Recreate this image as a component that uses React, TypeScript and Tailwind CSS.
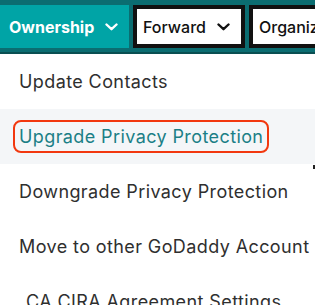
import React from "react";

function Chevron({ color }: { color: string }) {
  return (
    <svg width="13" height="8" viewBox="0 0 13 8" fill="none">
      <path d="M1.5 1.5 L6.5 6.2 L11.5 1.5" stroke={color} strokeWidth="2.4" strokeLinecap="round" strokeLinejoin="round" />
    </svg>
  );
}

export default function App() {
  const font = { fontFamily: "Inter, 'Noto Sans', sans-serif" };
  return (
    <div className="w-[315px] h-[305px] overflow-hidden bg-white relative" style={font}>
      <div className="flex h-[54px] bg-[#0b6d71] pt-[5px] gap-[4px] border-b-2 border-[#0a4f52] items-start">
        <div className="w-[129px] h-[43px] bg-[#00a4a6] flex items-center pl-[9px] gap-[11px] text-white font-bold text-[16px] shrink-0">
          <span>Ownership</span>
          <Chevron color="#ffffff" />
        </div>
        <div className="w-[112px] h-[43px] border-4 border-[#111111] bg-white flex items-center pl-[6px] gap-[11px] text-[#111111] font-medium text-[16px] shrink-0">
          <span>Forward</span>
          <Chevron color="#111111" />
        </div>
        <div className="w-[120px] h-[43px] border-4 border-[#111111] bg-white flex items-center pl-[6px] text-[#111111] font-medium text-[16px] shrink-0">
          <span>Organize</span>
        </div>
      </div>
      <div className="flex flex-col text-[18px] tracking-[0.4px] text-[#2f2f2f]">
        <div className="h-[55px] flex items-center pl-[19px]">Update Contacts</div>
        <div className="h-[55px] flex items-center pl-[13px] bg-[#f4f6f8]">
          <span className="border-2 border-[#f2380f] rounded-[8px] px-[4px] h-[33px] flex items-center text-[#1b7f86]">
            Upgrade Privacy Protection
          </span>
        </div>
        <div className="h-[55px] flex items-center pl-[19px] relative">
          Downgrade Privacy Protection
          <span className="absolute right-0 top-[1px] w-[2px] h-[4px] bg-[#222]" />
        </div>
        <div className="h-[55px] flex items-center pl-[19px]">Move to other GoDaddy Account</div>
        <div className="h-[55px] flex items-center pl-[26px]">CA CIRA Agreement Settings</div>
      </div>
    </div>
  );
}
